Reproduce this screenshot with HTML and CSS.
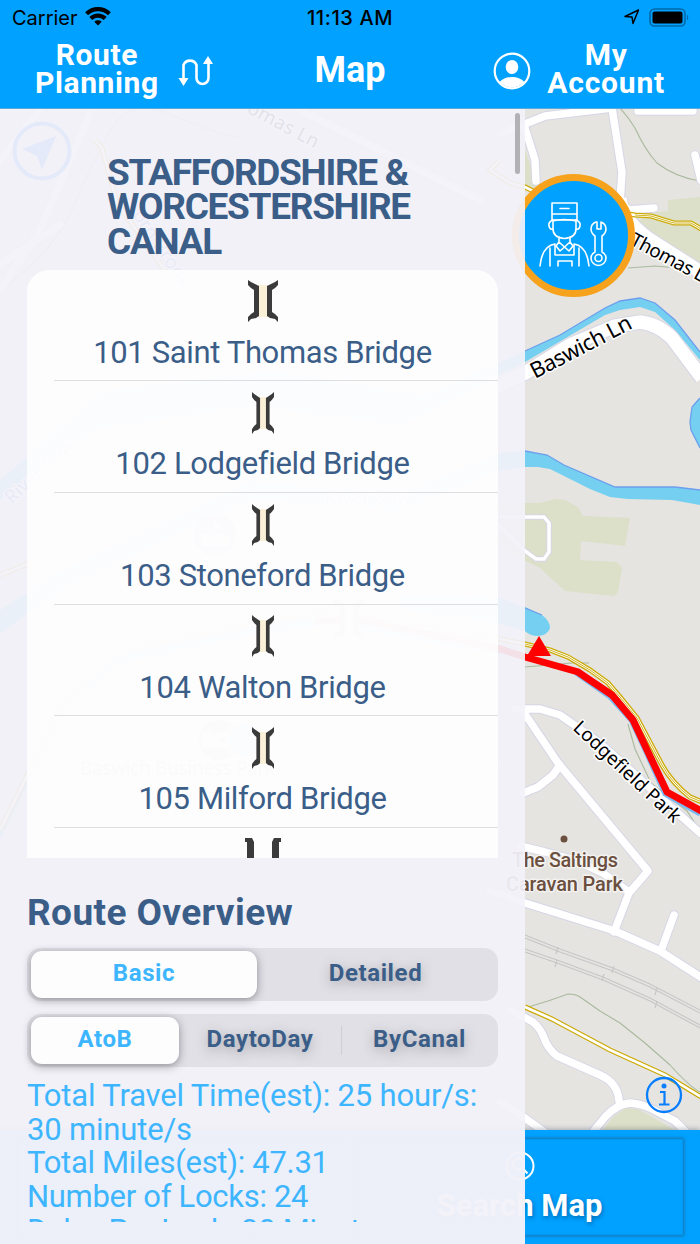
FILE: index.html
```html
<!DOCTYPE html>
<html lang="en">

<head>
	<meta charset="UTF-8">
	<meta name="viewport" content="width=device-width, initial-scale=1.0">
	<title>Map</title>
	<link rel="stylesheet" href="styles.css">
</head>

<body>
	<svg width="0" height="0" class="defs">
		<symbol id="bridge" viewBox="0 0 30 42" preserveAspectRatio="none">
			<path fill="#fbf1d8" d="M10 5h10v32H10z"/>
			<path fill="#3b3b3b" d="M0 0l3 2 4 2 4 2v30l-3 2-5 1-3 3v-5l3-3 3-2V10L3 8 0 5zM30 0l-3 2-4 2-4 2v30l3 2 5 1 3 3v-5l-3-3-3-2V10l3-2 3-3z"/>
		</symbol>
	</svg>

	<header class="header">
		<div class="status">
			<div class="carrier">Carrier
				<svg width="26" height="19" viewBox="0 0 26 19" fill="none" stroke="#000" stroke-width="4.2">
					<path d="M1.6 6.8a16.3 16.3 0 0 1 22.8 0M5.8 11.6a10.3 10.3 0 0 1 14.4 0"/>
					<path d="M9.3 14.8a5.4 5.4 0 0 1 7.4 0L13 18.5z" fill="#000" stroke="none"/>
				</svg>
			</div>
			<div class="time">11:13 AM</div>
			<div class="battery">
				<svg width="16" height="16" viewBox="0 0 16 16" fill="none" stroke="#000" stroke-width="1.5" stroke-linejoin="round"><path d="M1 7.5L14.5 1 9 14.5 8 8z"/></svg>
				<svg width="41" height="19" viewBox="0 0 41 19"><rect x="1" y="1" width="35" height="17" rx="4.5" fill="none" stroke="#0068a8" stroke-width="1.6"/><rect x="3.5" y="3.5" width="30" height="12" rx="2"/><path d="M38 6.5q2.5 3 0 6z" fill="#0068a8"/></svg>
			</div>
		</div>
		<nav class="nav">
			<div class="nav__link nav__link--left">
				<span>Route<br>Planning</span>
				<svg width="36" height="33" viewBox="0 0 36 33" fill="none" stroke="#fff" stroke-width="2.600">
					<path d="M5.500 24V10a7 7 0 0 1 13 0v13a6 6 0 0 0 12 0V8"/>
					<path d="M0.500 23h10l-5 8zM25 9h10l-5-8z" fill="#fff" stroke="none"/>
				</svg>
			</div>
			<h1 class="nav__title">Map</h1>
			<div class="nav__link nav__link--right">
				<svg width="38" height="38" viewBox="0 0 38 38">
					<circle cx="19" cy="19" r="17.300" fill="none" stroke="#fff" stroke-width="2.200"/>
					<ellipse cx="19" cy="15" rx="6.300" ry="7" fill="#fff"/>
					<path d="M6.500 30q5-5 12.500-5t12.500 5A17 17 0 0 1 6.500 30z" fill="#fff"/>
				</svg>
				<span>My<br>Account</span>
			</div>
		</nav>
	</header>

	<main class="screen">
		<svg class="map" viewBox="0 109 700 1135">
			<rect y="109" width="700" height="1135" fill="#e5e4e1"/>
			<!-- parks -->
			<g fill="#dce0c8">
				<path d="M525 150l14 40-14-4zM634 226l12-12 22-3v-11l32-3v74z"/>
				<path d="M500 503h40l15-4 10 1 13 7 5 9 47 2-5 28-44-5-1 19 37 2 5 6-4 24-4 4-49-5-25-23-40-20z"/>
				<path d="M598 1136l16-20 12-8 12 1 40 23v4z"/>
			</g>
			<!-- water -->
			<g fill="#74cff0">
				<path d="M0 500L90 430 250 405 400 425 525 362l80-47 15-5 20-3 15 5 20 18 25 30v-8l-25-32-20-17-15-5-20 3-15 7-45 27-35 16-100 45-150-25-170 20L0 480z"/>
				<path d="M0 610l60-38 190-90 150 12 100-41 25-2 22 4 17 10 51 22h60l25 3v15l-28-5-44-1-18-2-20-8-40-20-12-2h-13l-25 4-100 38-150-10-190 90-60 45z"/>
				<path d="M700 398q-10 7-10 25l1 7 9 18zM400 595l100 3 25 9 17 8q8 6 8 13-2 7-12 8-8 0-13-5l-35-10-90-12z"/>
				<path d="M0 830L60 700l60-45 140-30 70-8 170 30v8l-170-30-70 8-140 30-55 45L0 840z"/>
			</g>
			<path d="M525 351l35-16 45-27 15-7 20-3 15 5 20 17 25 32M525 451l22 4 17 10 51 22h60l25 3M700 398l-8 9-2 15 1 8 9 18M525 608l17 7" fill="none" stroke="#6e9eed" stroke-width="1.300"/>
			<!-- footpaths -->
			<path d="M620 108q9 10 15 20 10 22 22 35 18 14 43 18M628 268l27-2 45 4M525 667l47-4h17M628 724l7 25 16 34 36 28 13 20M525 1008l23-7 20-7q8 0 12 3l20 14 20 12 25 20 25 22q20 22 30 27M0 290q60-40 80-100l30-60q20-30 50-20 70 30 80 27" fill="none" stroke="#a9ba9c" stroke-width="1.100"/>
			<!-- railway -->
			<g fill="none" stroke="#c6c6c6" stroke-width="1.100">
				<path d="M525 935l35 14 53 19 37 16 50 26M525 938l35 14 53 19 37 16 50 26M525 949l32 11 46 17 47 21 50 27M525 952l32 11 46 17 47 21 50 27"/>
				<path d="M558 947l-2 7M557 960l-2 7M614 966l-2 7M604 974l-2 7M657 988l-2 7M657 1001l-2 7"/>
			</g>
			<!-- roads -->
			<defs>
				<g id="roads" fill="none" stroke-linecap="round" stroke-linejoin="round">
					<path d="M500 134l25-10 20-8 67-8 10 64-2 30 9 8 25-2M638 111h55M525 128l10 32 1 21M695 155l6 25"/>
					<path d="M515 709h25l20 6 40 28 100 90M525 714l33 49 90 108-19 22-15 39M560 765l-7 10-15 12-15 6M520 846l25 6 30 8 28 13 26 19"/>
					<path d="M490 891l35 12 90 28 45 20 42 27M662 948l12-33M510 1010l23 12q8 7 11 16 4 11 13 18l43 19q18 8 19 26M500 1102l25 16 25 18M588 1138l17-21q12-13 25-14 12 1 20 5l25 13 18 18"/>
					<path d="M0 290l40-60 60-140M0 160l40-50M300 110l100 50 80 40M0 265l60-40"/>
				</g>
				<path id="loop" fill="none" d="M500 517h44l5 6v29l-5 7h-8l-11-8-30-30"/>
				<path id="wide" fill="none" d="M470 400l55-27 45-28 45-19 25-4q18 2 32 16l30 40M620 198q2 24 35 45l55 35"/>
			</defs>
			<use href="#roads" stroke="#d6d6e6" stroke-width="9.500"/>
			<use href="#loop" stroke="#d6d6e6" stroke-width="5.500"/>
			<use href="#wide" stroke="#d6d6e6" stroke-width="15.500"/>
			<use href="#roads" stroke="#fff" stroke-width="7.500"/>
			<use href="#loop" stroke="#fff" stroke-width="3.500"/>
			<use href="#wide" stroke="#fff" stroke-width="13.500"/>
			<!-- towpaths -->
			<defs>
				<path id="tow" fill="none" d="M95 140l7 8 15 55 50 70M500 160l-10 10 20 13 15 4 30 15 80 13 16 1 23 7h17l12 7M0 575l50-20M0 830l60-120 60-60 200-38 180 27 25 5 25 6 18 7 22 13 18 13 12 14 17 21 25 47q10 18 28 32l12 5M525 1007l27 12 58 31 55 25 38 23"/>
			</defs>
			<use href="#tow" stroke="#ccab08" stroke-width="5.200"/>
			<use href="#tow" stroke="#fff" stroke-width="2.600"/>
			<path d="M525 644l25 6 18 7 22 13 18 13 12 14 17 21 25 47q10 18 28 32l12 5M635 215l16 1 23 7h17l12 7" fill="none" stroke="#ccab08" stroke-width=".9"/>
			<!-- route -->
			<path d="M576 673l34 24 21 23 15 32 19 42 35 20" fill="none" stroke="#79baf3" stroke-width="5"/>
			<path d="M315 621h50l135 28 25 8 53 15 34 23 21 25 15 32 19 40 36 20" fill="none" stroke="#f00" stroke-width="7"/>
			<path d="M539 636l12 20h-24z" fill="#f00"/>
			<use href="#bridge" x="334" y="598" width="30" height="42"/>
			<circle cx="215" cy="535" r="21" fill="#777"/>
			<path d="M201 535q4-3 7 0t7 0 7 0 7 0v11h-28zM214 522l7 4-7 4z" fill="#fff"/>
			<circle cx="219" cy="740" r="20" fill="#556"/>
			<circle cx="245" cy="740" r="18" fill="#568fd0" stroke="#fff" stroke-width="3"/>
			<circle cx="564" cy="839" r="3.500" fill="#6c503f"/>
			<g class="labels">
				<text transform="translate(629 244) rotate(28)" textLength="82">Thomas L</text>
				<text transform="translate(535 379) rotate(-27.500)" font-size="22" textLength="111">Baswich Ln</text>
				<text transform="translate(572 729) rotate(43)" textLength="139">Lodgefield Park</text>
				<text transform="translate(246 112) rotate(28)" textLength="78">omas Ln</text>
				<text transform="translate(12 505) rotate(-43)" fill="#5b7fd0">River Sow</text>
				<text x="325" y="504" fill="#5b7fd0">River Sow</text>
				<text transform="translate(132 215) rotate(56)" fill="#5b7fd0">orn Brook</text>
				<text x="80" y="775" textLength="195">Baswich Business Park</text>
				<text x="202" y="747" fill="#fff" font-weight="700">RC</text>
				<g fill="#6c503f" class="place">
					<text x="512" y="866.500" textLength="106">The Saltings</text>
					<text x="506" y="890.500" textLength="117">Caravan Park</text>
				</g>
			</g>
		</svg>

		<div class="pin pin--locate">
			<svg width="60" height="60" viewBox="0 0 60 60"><circle cx="30" cy="30" r="27.500" fill="none" stroke="#1b7dff" stroke-width="4"/><path d="M10 28l34-13-14 34-5-14z" fill="#1b7dff"/></svg>
		</div>
		<div class="pin pin--engineer">
			<svg width="110" height="110" viewBox="0 0 110 110" fill="none" stroke="#fff" stroke-width="1.600" stroke-linejoin="round" stroke-linecap="round">
				<path d="M34 23h25v17H34zM34 34h25M42 28.500h9"/>
				<path d="M35 40v9c0 6 5 9 11.500 9.500C53 58 58 55 58 49v-9M35 41q11-3 23 0"/>
				<path d="M35 40q-5 2-4 6 1 4 4 3M58 40q5 2 4 6-1 4-4 3"/>
				<path d="M41 57v5l5.500 5 5.500-5v-5M41 62l-3 4 4 5 4.500-4 4.500 4 4-5-3-4"/>
				<path d="M22 86q2-20 15-22M71 86q-2-20-15-22M32 86V68M61 86V68M37 65v10h19V65M40 86v-5h14v5"/>
				<path d="M79 42v7h4v-7q5 2 5 7 0 4-4 7v16q4 2 4 6a7.500 7.500 0 0 1-15 0q0-4 4-6V56q-4-3-4-7 0-5 5-7z"/>
				<circle cx="80.500" cy="78" r="3.500"/>
			</svg>
		</div>
		<div class="pin pin--info">
			<svg width="38" height="38" viewBox="0 0 38 38"><circle cx="19" cy="19" r="17" fill="none" stroke="#087eff" stroke-width="2.300"/><circle cx="19" cy="10" r="2.500" fill="#087eff"/><path d="M15 16h4.500v12M14 28.500h10.500" fill="none" stroke="#087eff" stroke-width="2.200"/></svg>
		</div>

		<div class="toolbar">
			<div class="toolbar__button"></div>
			<div class="toolbar__button">
				<svg width="30" height="30" viewBox="0 0 30 30" fill="none" stroke="#fff" stroke-width="2"><circle cx="15" cy="15" r="13.500"/><circle cx="13.500" cy="13" r="5.500"/><path d="M17.500 17l5 5.500"/></svg>
				<span>Search Map</span>
			</div>
		</div>

		<aside class="panel">
			<div class="panel__scroll"></div>
			<h2 class="canal">Staffordshire &amp;<br>Worcestershire<br>Canal</h2>
			<ul class="stops">
				<li class="stop"><svg class="stop__icon stop__icon--wide"><use href="#bridge"/></svg><span>101 Saint Thomas Bridge</span></li>
				<li class="stop"><svg class="stop__icon"><use href="#bridge"/></svg><span>102 Lodgefield Bridge</span></li>
				<li class="stop"><svg class="stop__icon"><use href="#bridge"/></svg><span>103 Stoneford Bridge</span></li>
				<li class="stop"><svg class="stop__icon"><use href="#bridge"/></svg><span>104 Walton Bridge</span></li>
				<li class="stop"><svg class="stop__icon"><use href="#bridge"/></svg><span>105 Milford Bridge</span></li>
				<li class="stop"><svg class="stop__icon stop__icon--lock" viewBox="0 0 36 42" fill="#3b3b3b"><path d="M0 0h7l2 4v38H2V4H0zM36 0h-7l-2 4v38h7V4h2z"/></svg></li>
			</ul>
			<h2 class="overview">Route Overview</h2>
			<div class="segment segment--two">
				<div class="segment__item segment__item--active">Basic</div>
				<div class="segment__item">Detailed</div>
			</div>
			<div class="segment segment--three">
				<div class="segment__item segment__item--active">AtoB</div>
				<div class="segment__item">DaytoDay</div>
				<div class="segment__item segment__item--line">ByCanal</div>
			</div>
			<div class="stats">
				<p class="stats__time">Total Travel Time(est): 25 hour/s:<br>30 minute/s</p>
				<p>Total Miles(est): 47.31</p>
				<p>Number of Locks: 24</p>
				<p>Delay Per Lock: 30 Minutes</p>
			</div>
		</aside>
	</main>
</body>

</html>
```
FILE: styles.css
```css
* {
	box-sizing: border-box;
}

body {
	margin: 0;
	width: 700px;
	height: 1244px;
	overflow: hidden;
	font-family: Roboto, "Liberation Sans", sans-serif;
}

h1, h2, p, ul {
	margin: 0;
	padding: 0;
}

svg {
	display: block;
	flex: none;
}

.defs {
	position: absolute;
}

/* header */
.header {
	height: 109px;
	background: #00a1ff;
	border-bottom: 1px solid #5aa9dc;
}

.status {
	display: grid;
	grid-template-columns: 1fr auto 1fr;
	align-items: center;
	height: 36px;
	padding: 0 10px 0 12px;
	font: 20px/36px Inter, sans-serif;
}

.carrier, .battery {
	display: flex;
	align-items: center;
	gap: 7px;
}

.carrier svg {
	margin-top: -3px;
}

.battery {
	justify-content: flex-end;
	gap: 9px;
}

.battery svg {
	margin-top: -2px;
}

.time {
	margin-right: 2px;
	font-weight: 500;
	letter-spacing: .6px;
}

.nav {
	display: grid;
	grid-template-columns: 1fr 72px 1fr;
	align-items: center;
	height: 68px;
	padding: 0 35px;
	color: #fff;
	font-weight: 700;
}

.nav__link {
	display: flex;
	align-items: center;
	font-size: 30px;
	line-height: 28.500px;
	text-align: center;
}

.nav__link--left {
	gap: 19px;
	letter-spacing: .6px;
}

.nav__link--right {
	justify-content: flex-end;
	gap: 16px;
	letter-spacing: .8px;
}

.nav__link span {
	margin-top: -2px;
}

.nav__link svg {
	margin-top: 2px;
}

.nav__title {
	margin-top: -1px;
	font-size: 36px;
	line-height: 68px;
	text-align: center;
}

/* map */
.screen {
	position: relative;
	display: flex;
	flex-direction: column;
	justify-content: flex-end;
	height: 1135px;
}

.map {
	position: absolute;
	top: 0;
	left: 0;
	width: 700px;
	height: 1135px;
}

.labels {
	font-family: "Noto Sans", sans-serif;
	font-size: 19px;
	stroke: #fff;
	stroke-width: 3px;
	stroke-linejoin: round;
	paint-order: stroke;
}

.place {
	font-family: Roboto, sans-serif;
	font-size: 20px;
	font-weight: 500;
	stroke: #f3f2f0;
}

.pin {
	position: absolute;
}

.pin--locate {
	left: 12px;
	top: 12px;
}

.pin--engineer {
	left: 512px;
	top: 65px;
	width: 123px;
	height: 123px;
	border: 7px solid #f6a21d;
	border-radius: 50%;
	background: #00a1ff;
}

.pin--engineer svg {
	margin: -1px 0 0 -1px;
}

.pin--info {
	left: 645px;
	top: 967px;
}

.toolbar {
	position: relative;
	display: grid;
	grid-template-columns: 1fr 1fr;
	gap: 12px;
	height: 114px;
	padding: 9px 17px;
	background: #00a1ff;
	box-shadow: 0 -1px 5px rgba(60, 70, 90, .4);
}

.toolbar__button {
	display: flex;
	flex-direction: column;
	align-items: center;
	padding-top: 12px;
	box-shadow: 0 0 3px 1px rgba(45, 75, 105, .55), inset 0 0 2px rgba(45, 75, 105, .3);
	color: #fff;
	font-size: 31px;
	font-weight: 700;
	line-height: 50px;
	text-shadow: 1px 2px 4px rgba(0, 60, 110, .5);
}

/* route panel */
.panel {
	position: absolute;
	left: 0;
	top: 0;
	width: 525px;
	height: 1135px;
	padding: 47px 27px 0;
	background: linear-gradient(rgba(243, 242, 249, .93) 1021px, rgba(243, 242, 249, .972) 1021px);
	color: #3b5e88;
}

.panel__scroll {
	position: absolute;
	right: 5px;
	top: 4px;
	width: 5px;
	height: 61px;
	border-radius: 3px;
	background: #b2b2b6;
}

.canal {
	margin: 0 0 11px 80px;
	font-size: 37px;
	line-height: 34.300px;
	letter-spacing: -1.300px;
	text-transform: uppercase;
}

.stops {
	height: 588px;
	overflow: hidden;
	border-radius: 22px 22px 0 0;
	background: rgba(255, 255, 255, .82);
	list-style: none;
}

.stop {
	position: relative;
	display: flex;
	flex-direction: column;
	align-items: center;
	height: 111.600px;
	padding-top: 10.500px;
	font-size: 31px;
	line-height: 36px;
	letter-spacing: -.36px;
}

.stop::after {
	content: "";
	position: absolute;
	left: 27px;
	right: 0;
	bottom: 0;
	border-bottom: 1px solid #dedee2;
}

.stop span {
	margin-top: 12.500px;
}

.stop__icon {
	width: 22px;
	height: 42px;
}

.stop__icon--wide {
	width: 30px;
}

.stop__icon--lock {
	width: 36px;
}

.overview {
	margin: 33px 0 13px;
	font-size: 37px;
	line-height: 44px;
	letter-spacing: .4px;
}

.segment {
	display: grid;
	height: 53px;
	margin-bottom: 13px;
	padding: 3px 4px;
	border-radius: 14px;
	background: #e1e0e6;
	font-size: 24px;
	font-weight: 700;
	line-height: 45px;
	letter-spacing: .6px;
	text-align: center;
	text-shadow: 0 3px 12px rgba(60, 60, 70, .35);
}

.segment--two {
	grid-template-columns: 226px 1fr;
}

.segment--three {
	grid-template-columns: 148px 1fr 157px;
	margin-bottom: 12px;
	padding-right: 0;
}

.segment__item--active {
	border-radius: 11px;
	background: #fdfdfe;
	box-shadow: 0 2px 8px rgba(60, 60, 70, .5);
	color: #3eb6ff;
	text-shadow: none;
}

.segment__item--line {
	background: linear-gradient(#cfced5, #cfced5) 0 9px / 1px 29px no-repeat;
}

.stats {
	height: 143px;
	overflow: hidden;
	color: #3eb6ff;
	font-size: 31px;
	line-height: 33.800px;
	letter-spacing: -.3px;
	white-space: nowrap;
}

.stats__time {
	letter-spacing: -.18px;
}
```
